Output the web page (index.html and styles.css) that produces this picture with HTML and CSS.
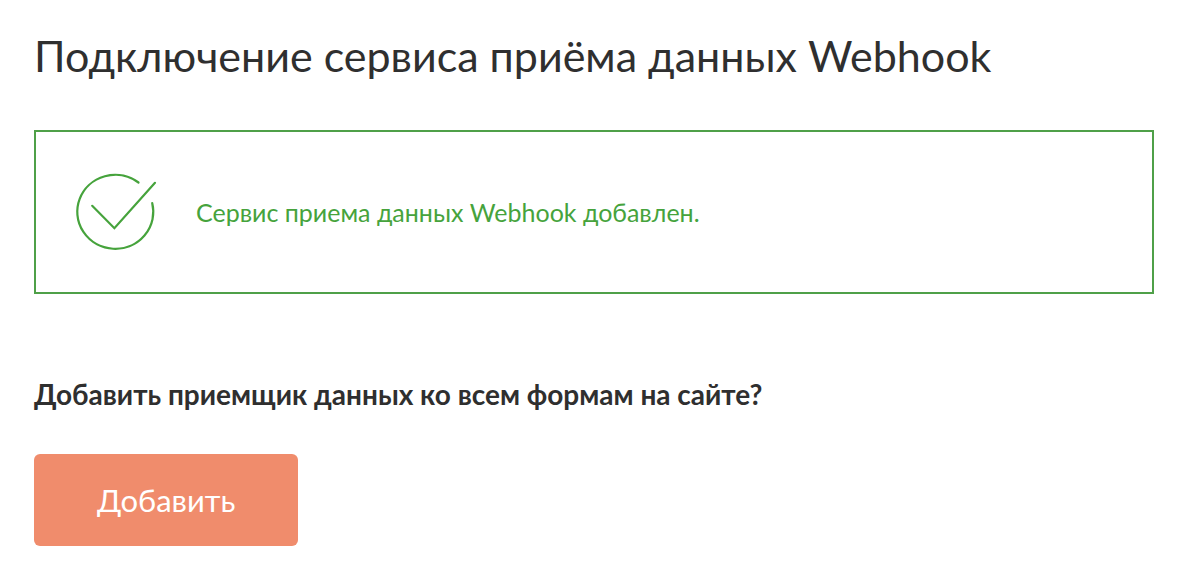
FILE: index.html
```html
<!DOCTYPE html>
<html lang="ru">
<head>
<meta charset="utf-8">
<meta name="viewport" content="width=device-width, initial-scale=1">
<title>Webhook</title>
<link rel="stylesheet" href="styles.css">
</head>
<body>
<main class="page">
  <h1 class="title">Подключение сервиса приёма данных Webhook</h1>
  <div class="notice" role="status">
    <svg class="notice-icon" viewBox="0 0 84 80" aria-hidden="true">
      <path d="M64.500 10.500A38 37 0 1 0 78.200 31"/>
      <path d="M18.200 33.800L40.400 56.200L81 10.800"/>
    </svg>
    <p class="notice-text">Сервис приема данных Webhook добавлен.</p>
  </div>
  <h2 class="question">Добавить приемщик данных ко всем формам на сайте?</h2>
  <button class="button" type="button">Добавить</button>
</main>
</body>
</html>
```

FILE: styles.css
```css
* { box-sizing: border-box; }

body {
  margin: 0;
  background: #fff;
  color: #2f2f2f;
  font-family: Lato, "Open Sans", sans-serif;
}

.page { padding: 30px 30px 32px 34px; }

.title {
  margin: 0 0 48px;
  font-size: 43px;
  font-weight: 400;
  line-height: 52px;
}

.notice {
  display: flex;
  align-items: center;
  gap: 38px;
  padding: 40px 38px;
  border: 2px solid #4fa048;
  color: #46a33c;
}

.notice-icon {
  flex: none;
  width: 84px;
  height: 80px;
  fill: none;
  stroke: currentColor;
  stroke-width: 2.2;
  stroke-linecap: round;
}

.notice-text {
  margin: 0;
  font-size: 25px;
  line-height: 32px;
}

.question {
  margin: 84px 0 44px;
  font-size: 28px;
  font-weight: 700;
  line-height: 32px;
}

.button {
  padding: 24px 63px;
  border: 0;
  border-radius: 6px;
  background: #f08c6c;
  color: #fff;
  font-family: inherit;
  font-size: 31px;
  line-height: 44px;
}
```
